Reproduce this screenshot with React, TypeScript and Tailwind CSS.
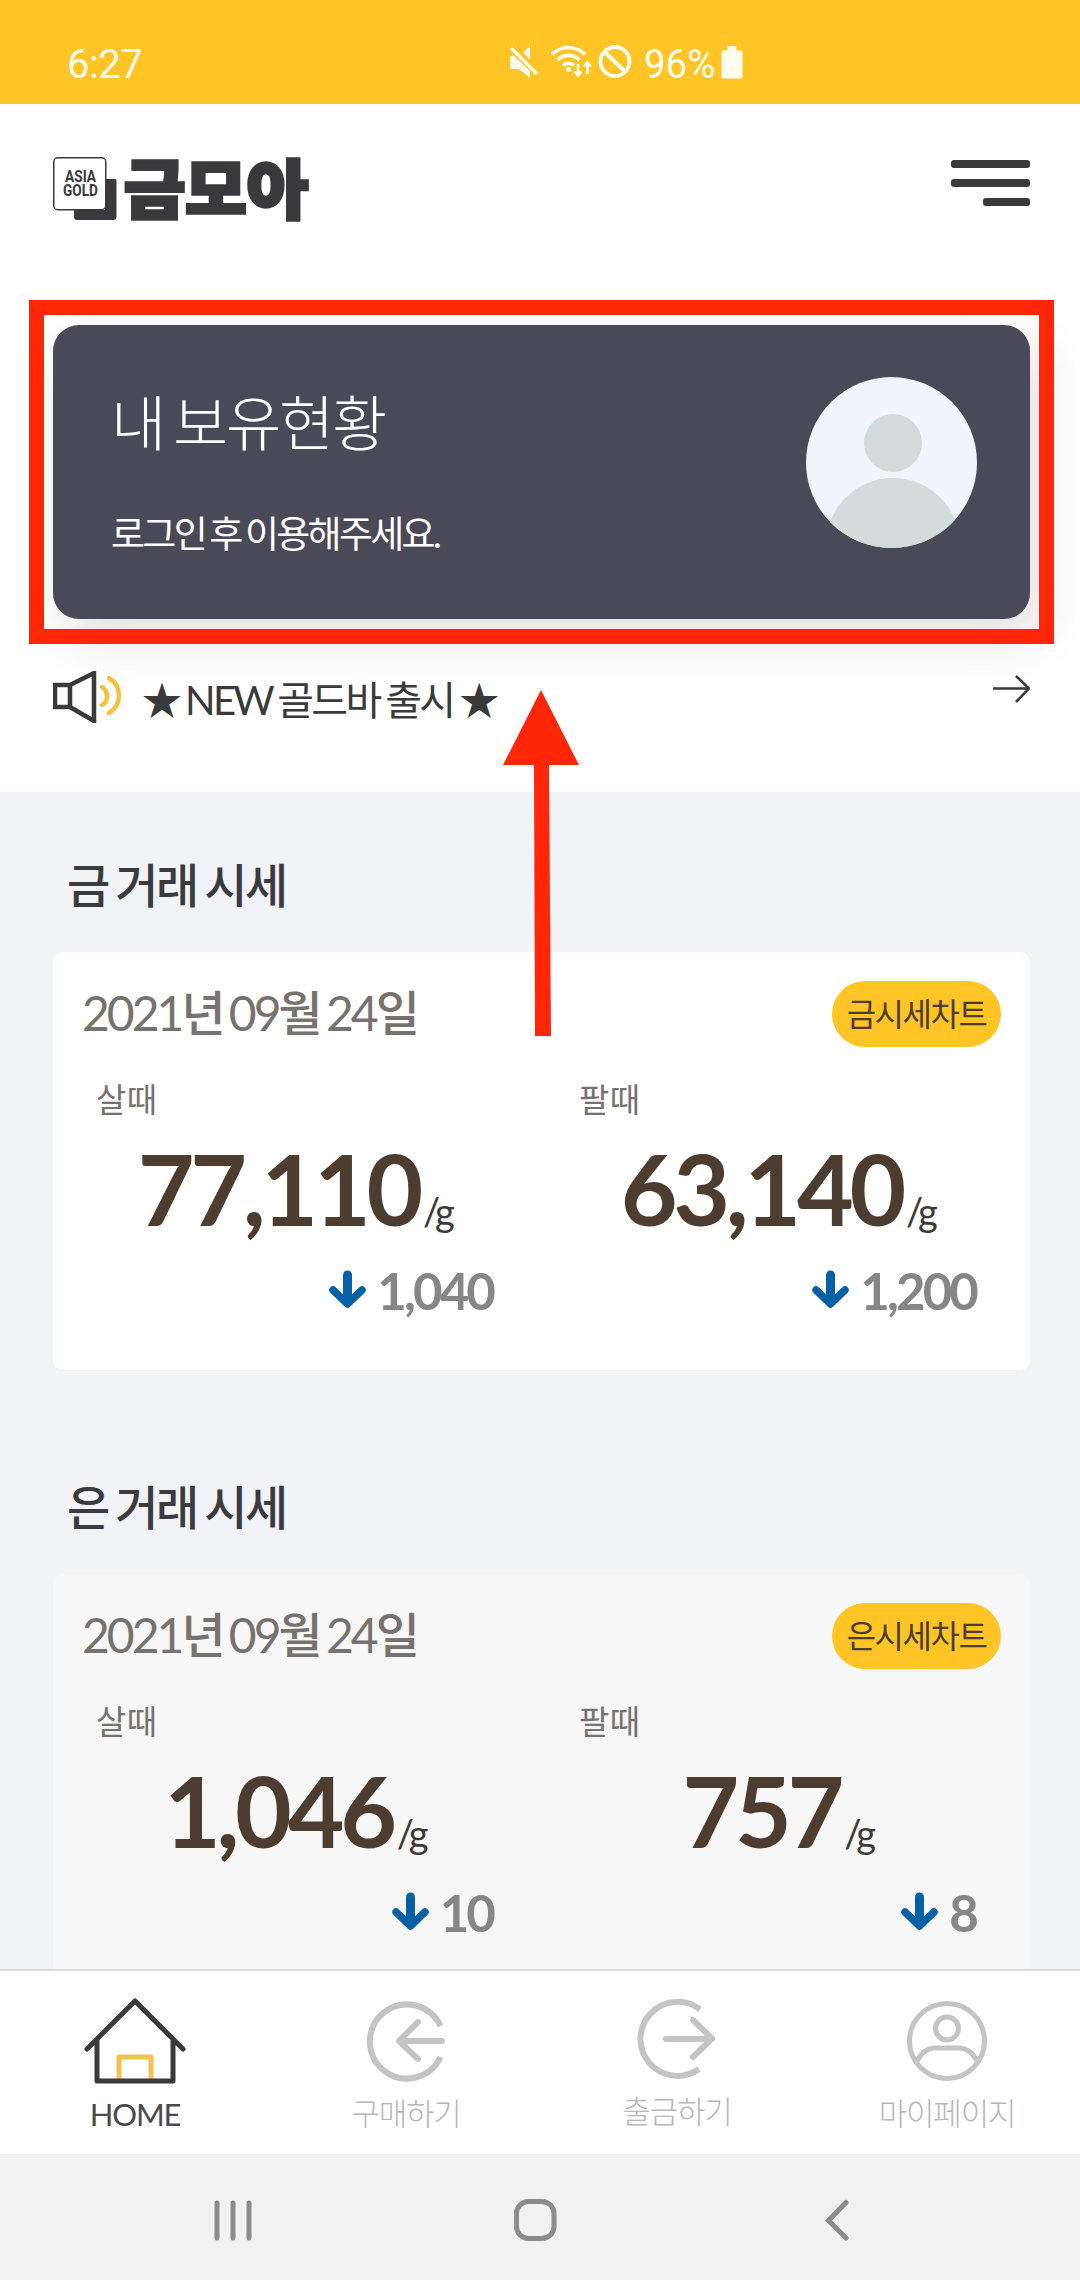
import type { ReactNode } from 'react';

interface Quote {
  label: string;
  price: string;
  change: string;
}

interface MarketSectionProps {
  title: string;
  date: string[];
  chartLabel: string;
  quotes: Quote[];
  cardClass: string;
}

const today = ['2021', '년', ' 09', '월', ' 24', '일'];

const goldQuotes: Quote[] = [
  { label: '살때', price: '77,110', change: '1,040' },
  { label: '팔때', price: '63,140', change: '1,200' },
];

const silverQuotes: Quote[] = [
  { label: '살때', price: '1,046', change: '10' },
  { label: '팔때', price: '757', change: '8' },
];

function StatusBar() {
  return (
    <div className="flex h-[104px] shrink-0 items-start bg-[#ffc425] pt-[41px] pl-[67px] font-['Roboto',sans-serif] text-[40px] leading-[47px] text-[#fffdf0]">
      <span className="w-[442px] tracking-[-0.5px]">6:27</span>
      {/* Muted speaker */}
      <svg width="30" height="34" viewBox="0 0 30 34" className="mt-[4px]" fill="currentColor">
        <path d="M1 12l3-2 17 16v7L10 24H1z" />
        <path d="M21 1v14l-7-7.500z" />
        <path d="M2 3l26 26" stroke="currentColor" strokeWidth="3.4" />
      </svg>
      {/* Wifi with traffic arrows */}
      <svg width="43" height="36" viewBox="0 0 43 36" className="mt-[4px] ml-[11px]" fill="none" stroke="currentColor" strokeWidth="3.6">
        <path d="M2 9.500a23 23 0 0 1 33 0" />
        <path d="M7.500 15a15.500 15.500 0 0 1 22 0" />
        <path d="M13 20.500a8 8 0 0 1 11 0" />
        <circle cx="18.500" cy="24.500" r="2.500" fill="currentColor" stroke="none" />
        <path d="M28 19v11M24.500 26.500l3.500 4 3.500-4M37.500 29V18M34 21.500l3.500-4 3.500 4" strokeWidth="2.6" />
      </svg>
      <svg width="34" height="34" viewBox="0 0 34 34" className="mt-[4px] ml-[5px]" fill="none" stroke="currentColor" strokeWidth="3.800">
        <circle cx="17" cy="16.500" r="14.500" />
        <path d="M6.500 7l21 20" />
      </svg>
      <span className="ml-[12px] w-[77px] origin-left scale-x-[0.96] whitespace-nowrap">96%</span>
      <svg width="22" height="34" viewBox="0 0 22 34" className="mt-[4px]" fill="currentColor">
        <path d="M6.500 2q0-1 1-1h7q1 0 1 1v3.500H20q1.500 0 1.500 1.500v25q0 1.500-1.500 1.500H2Q.5 33.500.5 32V7Q.5 5.500 2 5.500h4.500z" />
      </svg>
    </div>
  );
}

function Logo() {
  return (
    <svg width="262" height="66" viewBox="0 0 262 66" className="overflow-visible" fill="#3a3a3c">
      <path d="M51 22h11q1.500 0 1.500 1.500V60q0 3-3 3H24q-3 0-3-3v-7h31z" />
      <rect x=".75" y=".75" width="52" height="52" rx="4" fill="#fff" stroke="#3a3a3c" strokeWidth="1.5" />
      <text x="12" y="24.500" textLength="31" lengthAdjust="spacingAndGlyphs" className="font-['Roboto',sans-serif] text-[16px] font-bold">
        ASIA
      </text>
      <text x="10" y="39" textLength="35" lengthAdjust="spacingAndGlyphs" className="font-['Roboto',sans-serif] text-[16px] font-bold">
        GOLD
      </text>
      <text x="71" y="55.500" textLength="184" lengthAdjust="spacingAndGlyphs" stroke="#3a3a3c" strokeWidth="3.500" className="font-['Noto_Sans_CJK_KR',sans-serif] text-[64px] font-black">
        금모아
      </text>
    </svg>
  );
}

function Header() {
  return (
    <header className="flex h-[221px] items-start justify-between pt-[53px] pr-[50px] pl-[53px]">
      <Logo />
      <button className="mt-[3px] flex flex-col items-end gap-[11px]">
        <span className="h-[8px] w-[79px] rounded-[3px] bg-[#3a3a3a]" />
        <span className="h-[8px] w-[79px] rounded-[3px] bg-[#3a3a3a]" />
        <span className="h-[8px] w-[47px] rounded-[3px] bg-[#3a3a3a]" />
      </button>
    </header>
  );
}

function HoldingsCard() {
  return (
    <div className="relative ml-[53px] flex h-[294px] w-[977px] items-start justify-between rounded-[26px] bg-[#4a4958] pr-[53px] pl-[58px] text-white shadow-[12px_20px_50px_rgba(0,0,0,0.12)]">
      <div className="pt-[62px]">
        <h1 className="text-[60px] leading-[72px] font-light tracking-[-2.200px] [word-spacing:-5px]">내 보유현황</h1>
        <p className="mt-[53px] text-[37px] leading-[44px] tracking-[-2.700px] [word-spacing:-2.500px]">로그인 후 이용해주세요.</p>
      </div>
      <svg width="171" height="171" viewBox="0 0 171 171" className="mt-[52px]">
        <defs>
          <clipPath id="avatar">
            <circle cx="85.500" cy="85.500" r="85.500" />
          </clipPath>
        </defs>
        <g clipPath="url(#avatar)">
          <rect width="171" height="171" fill="#f1f5fb" />
          <circle cx="87" cy="66" r="29" fill="#d4dbdb" />
          <circle cx="87" cy="168" r="67" fill="#d4dbdb" />
        </g>
      </svg>
      {/* Highlight frame around the card */}
      <div className="absolute -top-[25px] -left-[24px] h-[344px] w-[1025px] border-[15px] border-[#ff2707]" />
    </div>
  );
}

function Notice() {
  return (
    <div className="relative flex h-[173px] items-start pr-[50px] pl-[53px] text-[#3a3a3a]">
      <svg width="70" height="52" viewBox="0 0 70 52" className="mt-[52px]" fill="none" strokeWidth="4.500">
        <path d="M2 14h15v22H2zM17 14L41 2v48L17 36" stroke="#3a3a3a" />
        <path d="M49 16q5 3 5 9.500T49 34M56 7q10 6 10 17.500T56 42" stroke="#f6c23e" strokeLinecap="round" />
      </svg>
      <p className="mt-[57px] ml-[19px] text-[40px] leading-[48px] tracking-[-2.700px] whitespace-nowrap [word-spacing:-1.800px]">★ NEW 골드바 출시 ★</p>
      <svg width="38" height="28" viewBox="0 0 38 28" className="mt-[56px] ml-auto" fill="none" stroke="#3a3a3a" strokeWidth="2.600">
        <path d="M1 13.500h36M24 1l13 12.500L24 27" />
      </svg>
      {/* Pointer up to the card */}
      <svg width="76" height="347" viewBox="0 0 76 347" className="absolute top-[71px] left-[503px]" fill="#ff2707">
        <path d="M38 0l38 75H46l2 271H32L31 75H0z" />
      </svg>
    </div>
  );
}

function QuoteColumn({ label, price, change }: Quote) {
  return (
    <div className="flex w-[483px] flex-col pr-[46px] pl-[39px]">
      <span className="text-[33px] leading-[40px] tracking-[0.3px] text-[#77726e]">{label}</span>
      <div className="mt-[20px] mr-[1px] flex items-baseline justify-center leading-[98px]">
        <span className="text-[98px] font-bold tracking-[-4.300px] text-[#4d3d31]">{price}</span>
        <span className="ml-[4px] text-[38px] tracking-[-3.500px] text-[#3d3a38]">/g</span>
      </div>
      <div className="mt-[5px] flex justify-end">
        <svg width="37" height="41" viewBox="0 0 37 41" className="mt-[5px]" fill="none" stroke="#0560a6" strokeLinecap="round" strokeLinejoin="round">
          <path d="M18.500 5v26" strokeWidth="9" />
          <path d="M4 20l14.500 14L33 20" strokeWidth="7.500" />
        </svg>
        <span className="mr-[1px] ml-[11px] text-[51px] leading-[52px] font-bold tracking-[-2.900px] text-[#868686]">{change}</span>
      </div>
    </div>
  );
}

function MarketSection({ title, date, chartLabel, quotes, cardClass }: MarketSectionProps) {
  return (
    <section className="h-[622px] shrink-0 px-[53px] pt-[65px]">
      <h2 className="h-[95px] pl-[14px] text-[47px] leading-[56px] font-medium tracking-[-2.500px] text-[#3a3a3f] [word-spacing:-1.800px]">{title}</h2>
      <div className={`h-[418px] w-[977px] rounded-[10px] pt-[29px] ${cardClass}`}>
        <div className="flex h-[66px] items-center justify-between px-[29px]">
          <span className="pb-[2px] text-[48px] leading-[52px] tracking-[-3px] whitespace-pre text-[#77726e] [word-spacing:-3px]">
            {date.map((part, i) => (
              <span key={i} className={i % 2 ? 'font-medium' : ''}>
                {part}
              </span>
            ))}
          </span>
          <button className="h-[66px] w-[169px] rounded-full bg-[#ffc425] text-[32px] tracking-[-1.500px] whitespace-nowrap text-[#4d3d31]">
            {chartLabel}
          </button>
        </div>
        <div className="mt-[32px] ml-[4px] flex">
          {quotes.map((quote) => (
            <QuoteColumn key={quote.label} {...quote} />
          ))}
        </div>
      </div>
    </section>
  );
}

function HomeIcon() {
  return (
    <svg width="102" height="86" viewBox="0 0 102 86" fill="none" strokeWidth="5" strokeLinecap="round" strokeLinejoin="round">
      <path d="M35 80V59h32v21" stroke="#f0c44c" />
      <path d="M3 51L51 3l48 48M13 43v40h76V43" stroke="#3a3a3a" />
    </svg>
  );
}

function BuyIcon() {
  return (
    <svg width="82" height="82" viewBox="0 0 82 82" fill="none" stroke="#c4c4c4" strokeWidth="6">
      <path d="M74.500 26A37 37 0 1 0 74.500 57" />
      <path d="M33 41h43M52 22L33 41l19 18" strokeLinecap="round" strokeLinejoin="round" />
    </svg>
  );
}

function WithdrawIcon() {
  return (
    <svg width="82" height="82" viewBox="0 0 82 82" fill="none" stroke="#c4c4c4" strokeWidth="6">
      <path d="M63 11.500A37 37 0 1 0 62 71" />
      <path d="M29 41h46M56 22l19 18.500L56 59" strokeLinecap="round" strokeLinejoin="round" />
    </svg>
  );
}

function MyPageIcon() {
  return (
    <svg width="82" height="82" viewBox="0 0 82 82" fill="none" stroke="#c4c4c4" strokeWidth="5">
      <circle cx="41" cy="41" r="37.500" />
      <circle cx="41" cy="28.500" r="11.500" />
      <path d="M11 61q6-12 17-13h26q11 1 17 13" />
    </svg>
  );
}

interface NavItemProps {
  icon: ReactNode;
  label: string;
  iconClass: string;
  labelClass: string;
}

function NavItem({ icon, label, iconClass, labelClass }: NavItemProps) {
  return (
    <button className="flex flex-col items-center">
      <span className={`h-[122px] ${iconClass}`}>{icon}</span>
      <span className={`text-[31px] leading-[37px] tracking-[-1.200px] ${labelClass}`}>{label}</span>
    </button>
  );
}

function BottomNav() {
  return (
    <nav className="grid h-[185px] shrink-0 grid-cols-4 items-start border-t-2 border-[#dcdcde] bg-white">
      <NavItem icon={<HomeIcon />} label="HOME" iconClass="pt-[27px]" labelClass="pt-[3px] text-[#4a4a4a]" />
      <NavItem icon={<BuyIcon />} label="구매하기" iconClass="pt-[29px] pl-[3px]" labelClass="pl-[2px] pt-[2px] font-light text-[#b8b8b8]" />
      <NavItem icon={<WithdrawIcon />} label="출금하기" iconClass="pt-[27px] pl-[6px]" labelClass="pl-[4px] font-light text-[#b8b8b8]" />
      <NavItem icon={<MyPageIcon />} label="마이페이지" iconClass="pt-[29px] pl-[4px]" labelClass="pl-[4px] pt-[2px] font-light text-[#b8b8b8]" />
    </nav>
  );
}

function SystemNav() {
  return (
    <div className="flex h-[126px] shrink-0 items-start bg-[#f1f1f1] pt-[44px] pl-[212px]">
      <svg width="42" height="44" viewBox="0 0 42 44" stroke="#8c8c8c" strokeWidth="5" strokeLinecap="round">
        <path d="M5 5v35M21 5v35M37 5v35" />
      </svg>
      <svg width="44" height="44" viewBox="0 0 44 44" className="ml-[259px]" fill="none" stroke="#8c8c8c" strokeWidth="5">
        <rect x="3.500" y="3.500" width="37.500" height="37" rx="12" />
      </svg>
      <svg width="26" height="44" viewBox="0 0 26 44" className="ml-[268px]" fill="none" stroke="#8c8c8c" strokeWidth="5" strokeLinecap="round">
        <path d="M21 4.500L3.500 22.500 21 40" />
      </svg>
    </div>
  );
}

export default function App() {
  return (
    <div className="flex h-[2280px] w-[1080px] flex-col overflow-hidden bg-white font-['Lato','Noto_Sans_CJK_KR',sans-serif]">
      <StatusBar />
      <div className="h-[688px] shrink-0">
        <Header />
        <HoldingsCard />
        <Notice />
      </div>
      <main className="flex h-[1177px] shrink-0 flex-col overflow-hidden bg-[#f1f3f7]">
        <MarketSection title="금 거래 시세" date={today} chartLabel="금시세차트" quotes={goldQuotes} cardClass="bg-white" />
        <MarketSection title="은 거래 시세" date={today} chartLabel="은시세차트" quotes={silverQuotes} cardClass="bg-[#f7f7f7]" />
      </main>
      <BottomNav />
      <SystemNav />
    </div>
  );
}
